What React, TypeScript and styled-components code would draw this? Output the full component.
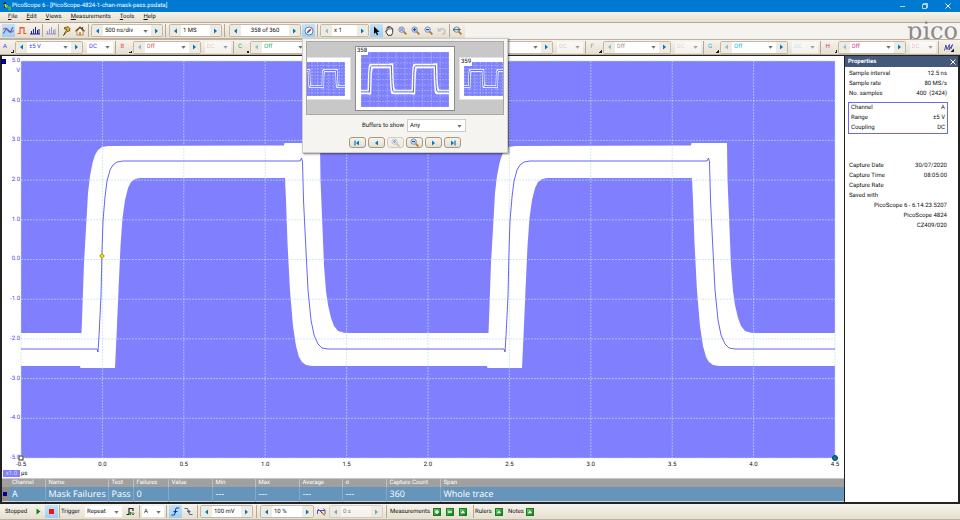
import React from 'react';
import styled, { createGlobalStyle, css } from 'styled-components';

const Global = createGlobalStyle`
  * { box-sizing: border-box; }
  body { margin: 0; background: #f5f3ef; }
  body, button, input, select, table {
    font-family: Roboto, "Open Sans", sans-serif;
    font-size: 6px;
    line-height: 8px;
    color: #101010;
    text-rendering: geometricPrecision;
  }
  button, input, select { margin: 0; padding: 0; border: 0; border-radius: 0; background: none; }
  svg { display: block; }
`;

const chrome = 'linear-gradient(#f6f3ec, #e6dfcf)';

const Shell = styled.div`
  display: flex;
  flex-direction: column;
  min-height: 100vh;
`;

/* ---------- title and menu ---------- */

const TitleBar = styled.header`
  display: flex;
  align-items: center;
  height: 12px;
  padding: 0 1px 0 3px;
  gap: 1px;
  background: #007ad0;
  color: #fff;
`;
const Title = styled.h1`
  flex: 1;
  margin: 0;
  font-size: 6px;
  font-weight: 400;
  white-space: nowrap;
`;
const WindowButton = styled.button`
  display: grid;
  place-items: center;
  width: 22px;
  height: 12px;
  color: #fff;
`;
const MenuBar = styled.nav`
  display: flex;
  align-items: center;
  gap: 9px;
  height: 11px;
  padding: 0 8px;
  background: ${chrome};
  border-bottom: 1px solid #b3a79a;
`;
const MenuItem = styled.button`
  &::first-letter { text-decoration: underline; }
`;

/* ---------- toolbars ---------- */

const TopStrip = styled.div`
  display: flex;
  justify-content: space-between;
  height: 16px;
  background: #f5f3ef;
`;
const Toolbar = styled.div`
  display: flex;
  align-items: center;
  height: 16px;
  padding-left: 2px;
  background: ${chrome};
  border-bottom: 1px solid #bdb1a4;
  white-space: nowrap;
`;
const ChannelBar = styled(Toolbar)`
  border-top: 1px solid #bdb1a4;
`;
const Logo = styled.div`
  height: 16px;
  padding: 4px 2px 0 0;
  font-family: "DejaVu Serif", serif;
  font-size: 24px;
  line-height: 8px;
  color: #8a8a8c;
`;
const Divider = styled.span<{ $gap?: number }>`
  width: 1px;
  height: 13px;
  margin: 0 ${p => p.$gap ?? 2}px;
  background: #b5a998;
`;
const Tool = styled.button<{ $active?: boolean; $faded?: boolean }>`
  display: grid;
  place-items: center;
  width: 13px;
  height: 13px;
  ${p => p.$active && css`background: linear-gradient(#c4e2fa, #9ccff6);`}
  ${p => p.$faded && css`> svg { opacity: 0.4; }`}
`;
const Group = styled.div<{ $off?: boolean }>`
  display: flex;
  align-items: center;
  height: 13px;
  border: 1px solid #c3b8a8;
  border-radius: 2px;
  overflow: hidden;
  opacity: ${p => (p.$off ? 0.55 : 1)};
`;
const Step = styled.button<{ $faded?: boolean }>`
  display: grid;
  place-items: center;
  width: 11px;
  height: 11px;
  background: #f0ebe0;
  > svg { opacity: ${p => (p.$faded ? 0.4 : 1)}; }
`;
const Field = styled.input<{ $w: number; $center?: boolean }>`
  width: ${p => p.$w}px;
  height: 11px;
  padding: 0 2px;
  background: #fff;
  text-align: ${p => (p.$center ? 'center' : 'left')};
`;
const DropBox = styled.span<{ $w: number; $tone?: string; $faded?: boolean; $h?: number }>`
  position: relative;
  display: block;
  width: ${p => p.$w}px;
  height: ${p => p.$h ?? 11}px;
  background: #fff;
  opacity: ${p => (p.$faded ? 0.6 : 1)};
  color: ${p => p.$tone ?? '#101010'};
  > select {
    appearance: none;
    width: 100%;
    height: 100%;
    padding: 0 2px;
    color: inherit;
    opacity: ${p => (p.$faded ? 0.45 : 1)};
  }
  > svg { position: absolute; right: 3px; top: 50%; margin-top: -1px; pointer-events: none; }
`;
const ChannelKey = styled.button<{ $tone: string }>`
  display: flex;
  align-items: center;
  width: 12px;
  height: 12px;
  color: ${p => p.$tone};
  background: linear-gradient(135deg, transparent 50%, #222 50%) no-repeat right 1px bottom 0 / 3px 3px;
`;
const Channel = styled.div`
  display: flex;
  align-items: center;
  flex: 1;
  padding-left: 1px;
`;
const Pad = styled.span<{ $w: number }>`
  width: ${p => p.$w}px;
`;

/* ---------- workspace ---------- */

const Workspace = styled.main`
  display: flex;
  flex: 1;
  border: solid #222;
  border-width: 1px 0 2px 2px;
  background: #fff;
`;
const View = styled.section`
  display: flex;
  flex-direction: column;
  flex: 1;
  min-width: 0;
`;
const Chart = styled.div`
  display: grid;
  flex: 1;
  grid-template: minmax(0, 1fr) 20px / 19px minmax(0, 1fr);
  padding: 5px 9px 0 0;
`;
const YAxis = styled.div`
  display: flex;
  flex-direction: column;
  justify-content: space-between;
  position: relative;
  padding-right: 1px;
  color: #4848f0;
  text-align: right;
`;
const YTick = styled.span`
  height: 0;
  line-height: 0;
`;
const YUnit = styled.span`
  position: absolute;
  right: 1px;
  top: 6px;
`;
const ChannelMarker = styled.i`
  position: absolute;
  left: -1px;
  top: -2px;
  width: 5px;
  height: 5px;
  background: #0000d8;
  border: 1px solid #000060;
`;
const PlotArea = styled.div`
  position: relative;
  > svg { position: absolute; inset: 0; width: 100%; height: 100%; overflow: visible; }
`;
const Handle = styled.i<{ $left: string; $top: string; $kind: 'square' | 'dot' | 'trigger' }>`
  position: absolute;
  left: ${p => p.$left};
  top: ${p => p.$top};
  width: 5px;
  height: 5px;
  transform: translate(-50%, -50%);
  border: 1px solid #333;
  background: #fff;
  ${p => p.$kind === 'dot' && css`width: 6px; height: 6px; border-radius: 50%; background: #008080; border-color: #045;`}
  ${p => p.$kind === 'trigger' && css`width: 4px; height: 4px; background: #ffee00; border-color: #a8a020; transform: translate(-50%, -50%) rotate(45deg);`}
`;
const Scale = styled.div`
  align-self: end;
  height: 7px;
  margin: 0 1px 1px 1px;
  background: #8080ff;
  color: #d9d9ff;
  line-height: 7px;
  text-align: center;
`;
const XAxis = styled.div`
  display: flex;
  flex-direction: column;
  justify-content: space-between;
  padding-top: 3px;
`;
const XTicks = styled.div`
  display: flex;
  justify-content: space-between;
`;
const XTick = styled.span`
  display: flex;
  justify-content: center;
  width: 0;
`;

const Measures = styled.table`
  width: 100%;
  table-layout: fixed;
  border-collapse: collapse;
  border-top: 1px solid #c8c8c8;
  border-bottom: 1px solid #c9d6df;
  color: #fff;
  white-space: nowrap;
  th, td { padding: 0 0 0 3px; text-align: left; border-left: 1px solid #c0c0c0; }
  th { height: 8px; font-weight: 400; line-height: 8px; background: #a0a0a0; color: #fff; }
  td {
    height: 14px;
    font-family: "Open Sans", sans-serif;
    font-size: 9px;
    line-height: 14px;
    background: #6595bb;
    border-left-color: #86a8c2;
    color: #fff;
  }
  th:nth-child(-n + 2), td:nth-child(-n + 2) { border-left: 0; }
  td:first-child { background: #8d8d8d; padding: 0 0 0 1px; }
`;
const RowMark = styled.i`
  display: block;
  width: 4px;
  height: 4px;
  background: #0000a0;
`;
const Col = styled.col<{ $w?: number }>`
  width: ${p => (p.$w ? `${p.$w}px` : 'auto')};
`;

const Panel = styled.aside`
  width: 116px;
  border: solid #222;
  border-width: 0 2px 0 1px;
  background: #fff;
`;
const PanelHead = styled.div`
  display: flex;
  justify-content: space-between;
  align-items: center;
  height: 11px;
  padding: 0 2px 0 3px;
  background: #44587a;
  color: #fff;
`;
const PanelTitle = styled.h2`
  margin: 0;
  font-size: 6px;
  font-weight: 700;
`;
const Facts = styled.dl<{ $boxed?: boolean }>`
  margin: 2px 11px 0 4px;
  ${p => p.$boxed && css`margin: 3px 10px 0 3px; padding: 0 2px; border: 1px solid #6a6ae8;`}
`;
const Later = styled(Facts)`
  margin-top: 27px;
`;
const Fact = styled.div`
  display: flex;
  justify-content: space-between;
  height: 10px;
  line-height: 10px;
  dd { margin: 0; white-space: pre; }
`;
const Lines = styled.div`
  margin: 0 11px 0 4px;
  text-align: right;
  line-height: 10px;
`;

/* ---------- buffer navigator ---------- */

const Anchor = styled.div`
  position: relative;
`;
const Navigator = styled.div`
  position: absolute;
  z-index: 2;
  left: 0;
  top: 14px;
  display: flex;
  flex-direction: column;
  align-items: center;
  width: 206px;
  height: 115px;
  padding: 2px 3px;
  background: #f5f4f0;
  border: 1px solid #d2cdc6;
  box-shadow: 1px 1px 2px rgba(0, 0, 0, 0.55);
`;
const Strip = styled.div`
  display: flex;
  justify-content: center;
  align-items: center;
  gap: 4px;
  width: 100%;
  height: 74px;
  overflow: hidden;
  background: #c8c8c8;
  border: 1px solid #a8a8a8;
`;
const Card = styled.figure<{ $main?: boolean }>`
  position: relative;
  flex: none;
  width: ${p => (p.$main ? 100 : 66)}px;
  height: ${p => (p.$main ? 65 : 43)}px;
  margin: 0;
  padding: ${p => (p.$main ? '5px 5px 3px' : '4px 5px 3px 4px')};
  background: #fff;
  border: 1px solid ${p => (p.$main ? '#8c8c8c' : '#e2e2e2')};
  > svg { width: 100%; height: 100%; }
`;
const CardLabel = styled.figcaption`
  position: absolute;
  left: 0;
  top: 0;
  padding: 0 1px;
  background: #fff;
`;
const ShowRow = styled.label`
  display: flex;
  align-items: center;
  gap: 3px;
  margin: 4px 0 0 18px;
  > span:last-child { border: 1px solid #d0ccc4; }
`;
const NavRow = styled.div`
  display: flex;
  gap: 2px;
  margin-top: 5px;
`;
const NavButton = styled.button<{ $off?: boolean }>`
  display: grid;
  place-items: center;
  width: 17px;
  height: 11px;
  background: ${chrome};
  border: 1px solid #a89880;
  border-radius: 3px;
  opacity: ${p => (p.$off ? 0.45 : 1)};
`;

/* ---------- bottom bar ---------- */

const StatusText = styled.span<{ $w: number }>`
  width: ${p => p.$w}px;
`;
const GreenButton = styled.button`
  display: grid;
  place-items: center;
  width: 8px;
  height: 8px;
  margin-right: 5px;
  background: linear-gradient(135deg, #6fd06f, #0c7a12);
  border: 1px solid #1b7a22;
`;

/* ---------- drawings ---------- */

const Arrow = ({ back = false, stop = false }: { back?: boolean; stop?: boolean }) => (
  <svg width="7" height="6" viewBox="0 0 7 6" fill="#0078c4">
    <g transform={back ? 'translate(7 0) scale(-1 1)' : undefined}>
      <path d="M2 0.5 5 3 2 5.5Z" />
      {stop && <path d="M5.4 0.5H6.6V5.5H5.4Z" />}
    </g>
  </svg>
);
const Chevron = () => (
  <svg width="5" height="3" viewBox="0 0 5 3"><path d="M0.3 0H4.7L2.5 2.7Z" fill="#707070" /></svg>
);

type Kind = 'area' | 'plus' | 'minus' | 'fit';
const Magnifier = ({ kind }: { kind: Kind }) => (
  <svg width="9" height="9" viewBox="0 0 10 10" fill="none">
    <path d="M6 6 9.3 9.3" stroke="#b07838" strokeWidth="2" />
    <circle cx="4" cy="4" r="3" fill="#cfe4f7" stroke="#7d8cab" strokeWidth="1.1" />
    {kind === 'area' && <path d="M2.5 2.500h3v3h-3Z" fill="#8c98e4" />}
    {(kind === 'plus' || kind === 'minus') && <path d="M2.3 4h3.400" stroke="#1840b0" strokeWidth="1.2" />}
    {kind === 'plus' && <path d="M4 2.300v3.400" stroke="#1840b0" strokeWidth="1.2" />}
    {kind === 'fit' && <path d="M0 4h8M1.500 2.500 0 4l1.500 1.500M6.500 2.500 8 4 6.500 5.500" stroke="#306848" strokeWidth="0.9" />}
  </svg>
);

const Icons = {
  app: (
    <svg width="8" height="9" viewBox="0 0 8 9" fill="none">
      <path d="M0.500 2 2 1v4l1.500-1" stroke="#111" strokeWidth="1.300" />
      <path d="M1 3.500 2.500 2v3h1.500v-2" stroke="#f3e01a" />
      <path d="M4 5h3.500v3H6V5.500" stroke="#45c234" strokeWidth="1.200" />
    </svg>
  ),
  scope: (
    <svg width="11" height="9" viewBox="0 0 11 9" fill="none" strokeWidth="1.100">
      <path d="M0 3.500C2 1.500 3 2 4.500 4.500S8 7 11 4.500" stroke="#e0506c" />
      <path d="M0 7.500C2 7 2 2.500 3.500 2.500S6 6.500 7.500 5.500 8.500 1.500 10.500 1.500" stroke="#2f5fd6" />
    </svg>
  ),
  persist: (
    <svg width="10" height="9" viewBox="0 0 10 9" fill="none">
      <path d="M0.500 7.500H3V1.500H7V7.500H9.500" stroke="#f0583a" strokeWidth="1.200" />
      <path d="M3 2.500H7" stroke="#f08878" />
    </svg>
  ),
  spectrum: (
    <svg width="10" height="9" viewBox="0 0 10 9" stroke="#1a1ac0">
      <path d="M1.500 8V5M3.500 8V3M5.500 8V1M7.500 8V4M9 8V3M0 8H10" />
    </svg>
  ),
  bolt: (
    <svg width="9" height="10" viewBox="0 0 9 10">
      <path d="M2.500 1.500 6 0.800 8 2.500 7.500 5 5 5.500 1.500 9.500 3.500 5.500 5 3.500 2.500 3Z" fill="#f0b818" stroke="#54401c" strokeWidth="0.800" />
    </svg>
  ),
  home: (
    <svg width="10" height="10" viewBox="0 0 10 10">
      <path d="M2 5v4h6V5L5 2Z" fill="#fff6d8" stroke="#7b5c35" strokeWidth="0.700" />
      <path d="M0.500 5.200 5 1 9.500 5.200M7.500 1v2" fill="none" stroke="#6b4b28" strokeWidth="1.200" />
      <path d="M4.200 6h1.600v3H4.200Z" fill="#d4781e" />
    </svg>
  ),
  compass: (
    <svg width="10" height="10" viewBox="0 0 10 10">
      <circle cx="5" cy="5" r="4" fill="#fff" stroke="#5a87b4" />
      <path d="M7.800 2.200 5.900 5.900 4.100 4.100Z" fill="#e03020" />
      <path d="M2.200 7.800 5.900 5.900 4.100 4.100Z" fill="#3468c8" />
    </svg>
  ),
  pointer: (
    <svg width="7" height="10" viewBox="0 0 7 10">
      <path d="M1 0.500V8L2.700 6.500 4 9.300 5.200 8.700 4 6 6.500 5.800Z" fill="#000" />
    </svg>
  ),
  hand: (
    <svg width="9" height="10" viewBox="0 0 9 10">
      <path d="M3 9.300 0.700 5.500C0.500 4.500 1.500 4.500 2 5.300V2C2 1 3.200 1 3.300 2V0.800C3.600 0 4.600 0.200 4.700 1V1.300C5 0.700 6 0.800 6.200 1.700V2.500C6.700 1.800 7.700 2.100 7.700 3V6.500L6.500 9.300Z" fill="#fff" stroke="#222" strokeWidth="0.900" />
      <path d="M3.400 2V4M4.800 1.500V4M6.200 2.500V4" stroke="#222" strokeWidth="0.500" />
    </svg>
  ),
  undo: (
    <svg width="9" height="8" viewBox="0 0 9 8">
      <path d="M2 3C4.500 0.500 8 2 8 4.500 8 6 7 7 5.500 7.500" fill="none" stroke="#7088b0" strokeWidth="1.400" />
      <path d="M0.500 0.500 0.800 4.800 4.500 4.200Z" fill="#7088b0" />
    </svg>
  ),
  math: (
    <svg width="10" height="9" viewBox="0 0 10 9">
      <path d="M0.500 7.500 2 2 3 6.500 5.500 1.500 5 7 8.500 1.500 7 6" fill="none" stroke="#5048b0" />
      <path d="M10 5.500V9H6.500Z" fill="#111" />
    </svg>
  ),
  advanced: (
    <svg width="9" height="9" viewBox="0 0 9 9" fill="none">
      <path d="M0.500 7.500H3V1.500H7V4" stroke="#222" strokeWidth="1.200" />
      <path d="M4.500 8V5M3 6.500 4.500 5 6 6.500" stroke="#189030" />
      <path d="M7 5V8M5.700 6.500 7 8 8.500 6.500" stroke="#555" strokeWidth="0.800" />
    </svg>
  ),
  rising: (
    <svg width="9" height="9" viewBox="0 0 9 9" fill="none" stroke="#1a2c8c" strokeWidth="0.900">
      <path d="M0.500 8H3.500L5 1H8.500M2.500 4.500h4M4.500 3v3" />
    </svg>
  ),
  falling: (
    <svg width="9" height="9" viewBox="0 0 9 9" fill="none" stroke="#4b558c" strokeWidth="0.900">
      <path d="M0.500 1.500H3.500L5.500 7.500H8.500M3 4.500h3.500M5 3v3" />
    </svg>
  ),
  delay: (
    <svg width="9" height="9" viewBox="0 0 9 9" fill="none">
      <path d="M0.500 7V3.500H3M2 2 0.500 3.500M3 3.500H8V7M6.500 1.500 8 3.500" stroke="#4040c0" strokeWidth="0.900" />
      <path d="M3.500 4 5.500 6.500" stroke="#222" />
      <path d="M5 6 8 8.500" stroke="#c09030" strokeWidth="1.300" />
    </svg>
  ),
  minimize: <svg width="5" height="5" viewBox="0 0 5 5"><path d="M0 2.500H5" stroke="#fff" strokeWidth="0.700" /></svg>,
  restore: (
    <svg width="6" height="6" viewBox="0 0 6 6" fill="none" stroke="#fff" strokeWidth="0.700">
      <path d="M0.500 1.500h4v4h-4ZM1.500 1.500V0.500h4v4H4.500" />
    </svg>
  ),
  close: <svg width="6" height="6" viewBox="0 0 6 6"><path d="M0.500 0.500 5.500 5.500M5.500 0.500 0.500 5.500" stroke="#fff" /></svg>,
};

type Point = [number, number];

const maskTop: Point[] = [
  [0, 272], [60.5, 272], [61.500, 245], [63, 202], [65.500, 159], [67, 132], [69, 115], [71.500, 102], [74, 94],
  [77, 89], [81, 86], [87, 85], [263, 84.500], [263.500, 82], [299, 82], [299.500, 119], [301, 155], [303, 205],
  [305, 230], [307, 244], [310, 257], [313, 265], [317, 270], [324, 272], [407, 272],
];
const maskBottom: Point[] = [
  [0, 305], [59, 305], [59.500, 307], [94, 307], [95.500, 275], [97.500, 229], [99.500, 185], [101.500, 157],
  [104, 139], [107, 127], [110, 121], [114, 118], [119, 117], [264, 117], [265, 139], [266.500, 182],
  [269, 230], [272, 265], [275, 285], [278, 296], [281, 301], [285, 304], [291, 305], [407, 305],
];
const signal: Point[] = [
  [0, 288], [76, 288], [77, 291], [78, 275], [80, 235], [81, 190], [82, 160], [84, 136], [86, 120], [89, 109],
  [92, 104], [96, 101], [102, 100], [279, 100], [280.500, 97], [281.500, 101], [282.500, 139], [284.500, 180],
  [287, 229], [290, 259], [293, 274], [297, 283], [301, 287], [307, 288], [407, 288],
];
const PERIOD = 407;
const repeated = (points: Point[]) => [
  ...points,
  ...points.map(([x, y]): Point => [x + PERIOD, y]),
];
const toPath = (points: Point[]) => 'M' + points.map(p => p.join(' ')).join('L');
const bandPath = toPath([...repeated(maskTop), ...repeated(maskBottom).reverse()]) + 'Z';
const signalPath = toPath(repeated(signal));
const gridPath = Array.from({ length: 11 }, (_, i) => `M${i * 81.4} 0V397M0 ${i * 39.7}H814`).join('');

const Trace = ({ small = false }: { small?: boolean }) => (
  <svg viewBox="0 0 814 397" preserveAspectRatio="none" aria-hidden="true">
    <path d="M0 0H814V397H0Z" fill="#8080ff" />
    <path d={bandPath} fill="#fff" />
    <path
      d={gridPath} fill="none" stroke="#b8e0e8" strokeOpacity={small ? 0.4 : 0.65}
      strokeDasharray="2 1" vectorEffect="non-scaling-stroke"
    />
    <path
      d={signalPath} fill="none" stroke="#5454f4" strokeWidth="0.9"
      vectorEffect="non-scaling-stroke"
    />
  </svg>
);

/* ---------- composed parts ---------- */

const Drop = ({ label, value, w, tone, faded, h }: {
  label?: string; value: string; w: number; tone?: string; faded?: boolean; h?: number;
}) => (
  <DropBox $w={w} $tone={tone} $faded={faded} $h={h}>
    <select aria-label={label} defaultValue={value} disabled={faded}><option>{value}</option></select>
    <Chevron />
  </DropBox>
);

const Stepper = ({ label, children, backOff, off }: {
  label: string; children: React.ReactNode; backOff?: boolean; off?: boolean;
}) => (
  <Group $off={off}>
    <Step $faded={backOff} disabled={off} aria-label={`Previous ${label}`}><Arrow back /></Step>
    {children}
    <Step disabled={off} aria-label={`Next ${label}`}><Arrow /></Step>
  </Group>
);

const channels = [
  { id: 'A', tone: '#4040f0', range: '±5 V' },
  { id: 'B', tone: '#f04850', range: 'Off' },
  { id: 'C', tone: '#20b070', range: 'Off' },
  { id: 'D', tone: '#c8a830', range: 'Off' },
  { id: 'E', tone: '#a040b0', range: 'Off' },
  { id: 'F', tone: '#909090', range: 'Off' },
  { id: 'G', tone: '#20b0f0', range: 'Off' },
  { id: 'H', tone: '#d02880', range: 'Off' },
];

const columns: { head: string; value: string; w?: number }[] = [
  { head: 'Channel', value: 'A', w: 36 },
  { head: 'Name', value: 'Mask Failures', w: 63 },
  { head: 'Test', value: 'Pass', w: 25 },
  { head: 'Failures', value: '0', w: 35 },
  { head: 'Value', value: '', w: 44 },
  { head: 'Min', value: '---', w: 43 },
  { head: 'Max', value: '---', w: 44 },
  { head: 'Average', value: '---', w: 43 },
  { head: 'σ', value: '---', w: 44 },
  { head: 'Capture Count', value: '360', w: 54 },
  { head: 'Span', value: 'Whole trace' },
];

const yTicks = ['5.0', '4.0', '3.0', '2.0', '1.0', '0.0', '-1.0', '-2.0', '-3.0', '-4.0', '-5.0'];
const xTicks = ['-0.5', '0.0', '0.5', '1.0', '1.5', '2.0', '2.5', '3.0', '3.5', '4.0', '4.5'];

const FactRow = ({ name, value }: { name: string; value: string }) => (
  <Fact><dt>{name}</dt><dd>{value}</dd></Fact>
);

const Green = ({ label, shape }: { label: string; shape: 'plus' | 'minus' | 'up' }) => (
  <GreenButton aria-label={label}>
    <svg width="6" height="6" viewBox="0 0 6 6" fill="none" stroke="#fff" strokeWidth="1.400">
      {shape === 'plus' && <path d="M1 3H5M3 1V5" />}
      {shape === 'minus' && <path d="M1 3H5" />}
      {shape === 'up' && <path d="M0.800 4.200 3 1.500 5.200 4.200Z" fill="#fff" stroke="none" />}
    </svg>
  </GreenButton>
);

const BufferNavigator = () => (
  <Navigator role="dialog" aria-label="Buffer navigator">
    <Strip>
      <Card><Trace small /></Card>
      <Card $main><Trace small /><CardLabel>358</CardLabel></Card>
      <Card><Trace small /><CardLabel>359</CardLabel></Card>
    </Strip>
    <ShowRow>
      <span>Buffers to show</span>
      <Drop value="Any" w={59} h={13} />
    </ShowRow>
    <NavRow>
      <NavButton aria-label="First buffer"><Arrow back stop /></NavButton>
      <NavButton aria-label="Previous buffer"><Arrow back /></NavButton>
      <NavButton $off disabled aria-label="Zoom in"><Magnifier kind="plus" /></NavButton>
      <NavButton aria-label="Zoom out"><Magnifier kind="minus" /></NavButton>
      <NavButton aria-label="Next buffer"><Arrow /></NavButton>
      <NavButton aria-label="Last buffer"><Arrow stop /></NavButton>
    </NavRow>
  </Navigator>
);

export default function App() {
  return (
    <Shell>
      <Global />
      <TitleBar>
        {Icons.app}
        <Title>PicoScope 6 - [PicoScope-4824-1-chan-mask-pass.psdata]</Title>
        <WindowButton aria-label="Minimize">{Icons.minimize}</WindowButton>
        <WindowButton aria-label="Restore">{Icons.restore}</WindowButton>
        <WindowButton aria-label="Close">{Icons.close}</WindowButton>
      </TitleBar>
      <MenuBar>
        {['File', 'Edit', 'Views', 'Measurements', 'Tools', 'Help'].map(m => <MenuItem key={m}>{m}</MenuItem>)}
      </MenuBar>

      <TopStrip>
        <Toolbar>
          <Tool $active aria-label="Scope mode">{Icons.scope}</Tool>
          <Tool aria-label="Persistence mode">{Icons.persist}</Tool>
          <Tool aria-label="Spectrum mode">{Icons.spectrum}</Tool>
          <Divider $gap={1} />
          <Tool $faded aria-label="Spectrum options">{Icons.spectrum}</Tool>
          <Divider $gap={1} />
          <Tool aria-label="Auto setup">{Icons.bolt}</Tool>
          <Tool aria-label="Home">{Icons.home}</Tool>
          <Divider $gap={2} />
          <Stepper label="timebase"><Drop label="Timebase" value="500 ns/div" w={48} /></Stepper>
          <Divider $gap={2} />
          <Pad $w={1} />
          <Stepper label="sample count"><Field $w={29} aria-label="Samples" defaultValue="1 MS" /></Stepper>
          <Divider $gap={2} />
          <Pad $w={2} />
          <Stepper label="buffer"><Field $w={48} $center aria-label="Buffer" defaultValue="358 of 360" /></Stepper>
          <Pad $w={1} />
          <Anchor>
            <Tool $active aria-label="Buffer overview">{Icons.compass}</Tool>
            <BufferNavigator />
          </Anchor>
          <Divider $gap={2} />
          <Stepper label="zoom" backOff><Field $w={25} aria-label="Zoom" defaultValue="x 1" /></Stepper>
          <Pad $w={1} />
          <Tool $active aria-label="Select">{Icons.pointer}</Tool>
          <Tool aria-label="Pan">{Icons.hand}</Tool>
          <Tool aria-label="Marquee zoom"><Magnifier kind="area" /></Tool>
          <Tool aria-label="Zoom in"><Magnifier kind="plus" /></Tool>
          <Tool aria-label="Zoom out"><Magnifier kind="minus" /></Tool>
          <Tool $faded aria-label="Undo zoom">{Icons.undo}</Tool>
          <Divider $gap={1} />
          <Tool aria-label="Full view"><Magnifier kind="fit" /></Tool>
          <Pad $w={1} />
        </Toolbar>
        <Logo>pico</Logo>
      </TopStrip>

      <ChannelBar>
        {channels.map(({ id, tone, range }) => (
          <Channel key={id}>
            <ChannelKey $tone={tone} aria-label={`Channel ${id} options`}>{id}</ChannelKey>
            <Stepper label={`range ${id}`} backOff={id !== 'A'}>
              <Drop label={`Channel ${id} range`} value={range} w={44} tone={tone} />
            </Stepper>
            <Pad $w={4} />
            <Drop label={`Channel ${id} coupling`} value="DC" w={26} tone={tone} faded={id !== 'A'} />
            <Divider $gap={2} />
          </Channel>
        ))}
        <Tool aria-label="Math channels">{Icons.math}</Tool>
        <Pad $w={5} />
      </ChannelBar>

      <Workspace>
        <View>
          <Chart>
            <YAxis>
              <ChannelMarker />
              {yTicks.map(t => <YTick key={t}>{t}</YTick>)}
              <YUnit>V</YUnit>
            </YAxis>
            <PlotArea>
              <Trace />
              <Handle $kind="trigger" $left="10%" $top="49%" />
              <Handle $kind="square" $left="0%" $top="100%" />
              <Handle $kind="dot" $left="100%" $top="100%" />
            </PlotArea>
            <Scale>x1.0</Scale>
            <XAxis>
              <XTicks>{xTicks.map(t => <XTick key={t}>{t}</XTick>)}</XTicks>
              <span>µs</span>
            </XAxis>
          </Chart>
          <Measures>
            <colgroup>
              <Col $w={7} />
              {columns.map(c => <Col key={c.head} $w={c.w} />)}
            </colgroup>
            <thead>
              <tr><th aria-label="Marker" />{columns.map(c => <th key={c.head} scope="col">{c.head}</th>)}</tr>
            </thead>
            <tbody>
              <tr><td><RowMark /></td>{columns.map(c => <td key={c.head}>{c.value}</td>)}</tr>
            </tbody>
          </Measures>
        </View>
        <Panel>
          <PanelHead>
            <PanelTitle>Properties</PanelTitle>
            <button aria-label="Close properties">{Icons.close}</button>
          </PanelHead>
          <Facts>
            <FactRow name="Sample interval" value="12.5 ns" />
            <FactRow name="Sample rate" value="80 MS/s" />
            <FactRow name="No. samples" value="400  (2424)" />
          </Facts>
          <Facts $boxed>
            <FactRow name="Channel" value="A" />
            <FactRow name="Range" value="±5 V" />
            <FactRow name="Coupling" value="DC" />
          </Facts>
          <Later>
            <FactRow name="Capture Date" value="30/07/2020" />
            <FactRow name="Capture Time" value="08:05:00" />
            <FactRow name="Capture Rate" value="" />
            <FactRow name="Saved with" value="" />
          </Later>
          <Lines>
            <div>PicoScope 6 - 6.14.23.5207</div>
            <div>PicoScope 4824</div>
            <div>CZ409/020</div>
          </Lines>
        </Panel>
      </Workspace>

      <Toolbar>
        <Pad $w={3} />
        <StatusText $w={27}>Stopped</StatusText>
        <Tool aria-label="Start">
          <svg width="5" height="7" viewBox="0 0 5 7"><path d="M0.500 0.500 4.500 3.500 0.500 6.500Z" fill="#14841c" /></svg>
        </Tool>
        <Tool $active aria-label="Stop">
          <svg width="5" height="5" viewBox="0 0 5 5"><path d="M0 0H5V5H0Z" fill="#f81400" /></svg>
        </Tool>
        <Divider $gap={1} />
        <StatusText $w={24}>Trigger</StatusText>
        <Drop label="Trigger mode" value="Repeat" w={37} />
        <Pad $w={2} />
        <Tool aria-label="Advanced triggers">{Icons.advanced}</Tool>
        <Divider $gap={2} />
        <Drop label="Trigger source" value="A" w={22} />
        <Divider $gap={2} />
        <Tool $active aria-label="Rising edge">{Icons.rising}</Tool>
        <Tool aria-label="Falling edge">{Icons.falling}</Tool>
        <Divider $gap={2} />
        <Stepper label="threshold"><Field $w={29} aria-label="Threshold" defaultValue="100 mV" /></Stepper>
        <Divider $gap={3} />
        <Stepper label="pre-trigger"><Field $w={30} aria-label="Pre-trigger" defaultValue="10 %" /></Stepper>
        <Pad $w={1} />
        <Tool aria-label="Trigger delay">{Icons.delay}</Tool>
        <Pad $w={1} />
        <Stepper label="delay" off><Field $w={30} aria-label="Delay" disabled defaultValue="0 s" /></Stepper>
        <Divider $gap={3} />
        <StatusText $w={43}>Measurements</StatusText>
        <Green label="Add measurement" shape="plus" />
        <Green label="Remove measurement" shape="minus" />
        <Green label="Edit measurement" shape="up" />
        <Divider $gap={1} />
        <StatusText $w={20}>Rulers</StatusText>
        <Green label="Rulers" shape="up" />
        <StatusText $w={18}>Notes</StatusText>
        <Green label="Notes" shape="up" />
      </Toolbar>
    </Shell>
  );
}
